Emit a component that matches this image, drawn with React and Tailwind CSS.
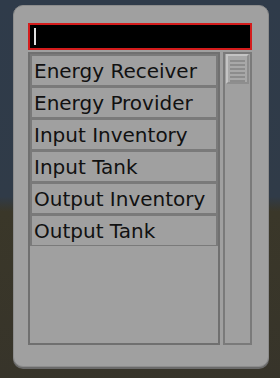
import React from 'react';

const entries = [
  'Energy Receiver',
  'Energy Provider',
  'Input Inventory',
  'Input Tank',
  'Output Inventory',
  'Output Tank',
];

const ListEntry = ({ label }) => (
  <div className="h-[32px] border-x-2 border-t-2 border-b border-[#7a7a7a] bg-[#a0a0a0]">
    <div className="pt-[1px] pl-[2px] text-[20px] leading-[28px] text-[#111] whitespace-nowrap font-['DejaVu_Sans',sans-serif]">
      {label}
    </div>
  </div>
);

const App = () => {
  return (
    <div className="w-[280px] h-[378px] overflow-hidden pt-[5px] pl-[13px] bg-[linear-gradient(to_bottom,#2f3b4a_0%,#303b48_52%,#3a3729_56%,#37342a_100%)]">
      {/* panel */}
      <div className="w-[256px] h-[362px] rounded-[10px] border border-[#8c8c8c] bg-[#a0a0a0] pl-[14px] pt-[17px] shadow-[0_2px_0_#6a6a6a]">
        {/* search field */}
        <div className="w-[224px] h-[27px] border-2 border-[#d41c1c] bg-black flex items-center pl-[4px]">
          <div className="w-[2px] h-[17px] bg-[#e0e0e0]" />
        </div>

        <div className="mt-[2px] flex gap-[3px] h-[293px]">
          {/* list */}
          <div className="w-[192px] h-full border-2 border-[#707070]">
            {entries.map((e) => (
              <ListEntry key={e} label={e} />
            ))}
          </div>

          {/* scrollbar */}
          <div className="w-[29px] h-full border-2 border-[#7a7a7a] pl-[1px]">
            <div className="w-[23px] h-[30px] border-t-2 border-l-2 border-[#c4c4c4] border-r-2 border-b-2 border-r-[#8e8e8e] border-b-[#8e8e8e] bg-[#a8a8a8] flex flex-col items-center gap-[2px] pt-[4px]">
              {[0, 1, 2, 3, 4, 5].map((i) => (
                <div key={i} className="w-[15px] h-[2px] bg-[#8c8c8c]" />
              ))}
            </div>
          </div>
        </div>
      </div>
    </div>
  );
};

export default App;
